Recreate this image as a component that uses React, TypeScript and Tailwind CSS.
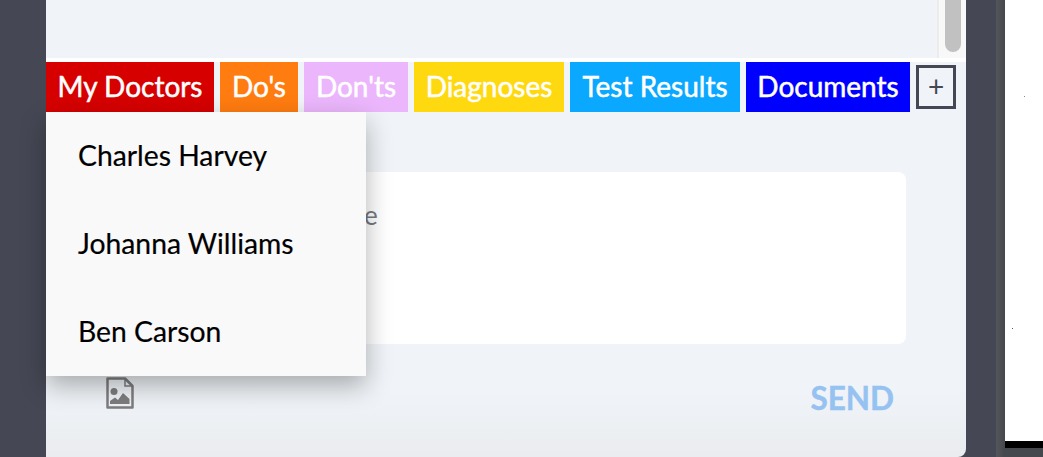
const TABS = [
  { label: 'My Doctors', className: 'w-[168px] bg-[#d60000]' },
  { label: "Do's", className: 'w-[78px] bg-[#ff7c10]' },
  { label: "Don'ts", className: 'w-[104px] bg-[#ebb6fc]' },
  { label: 'Diagnoses', className: 'w-[150px] bg-[#ffd90f]' },
  { label: 'Test Results', className: 'w-[170px] bg-[#0aa8ff]' },
  { label: 'Documents', className: 'w-[164px] bg-[#0000ff]' },
]

const DOCTORS = ['Charles Harvey', 'Johanna Williams', 'Ben Carson']

function ImageFileIcon() {
  return (
    <svg viewBox="0 0 28 32" className="h-8 w-7 text-[#7d7d7d]" fill="none">
      <path d="M1.5 1.5H19L26.5 9V30.5H1.5Z" stroke="currentColor" strokeWidth="2.5" strokeLinejoin="round" />
      <path d="M19 1.5V9H26.5" stroke="currentColor" strokeWidth="1.5" />
      <circle cx="8" cy="14.5" r="3.5" fill="currentColor" />
      <path d="M4 27V24L9 20.5L12 23L17 16L23.5 22V27Z" fill="currentColor" />
    </svg>
  )
}

export default function App() {
  return (
    <div className="flex h-[457px] w-[1043px] overflow-hidden bg-[#454754] pl-[46px] font-['Lato',sans-serif]">
      {/* Chat panel */}
      <div className="relative flex h-full w-[920px] flex-col rounded-br-lg bg-gradient-to-b from-[#f0f4f8] from-[85%] to-[#eaecef]">
        <div className="flex h-[58px] justify-end">
          <div className="flex w-[29px] justify-center border-l-2 border-[#ececec] bg-[#f8f8f8]">
            <div className="h-[52px] w-4 rounded-b-full bg-[#c1c1c1]" />
          </div>
        </div>
        <div className="h-1 bg-white" />

        {/* Tabs */}
        <div className="flex h-[50px] items-center gap-1.5">
          {TABS.map((tab) => (
            <div
              key={tab.label}
              className={`flex h-full items-center justify-center pb-0.5 text-[28px] text-white [-webkit-text-stroke:0.5px_white] ${tab.className}`}
            >
              {tab.label}
            </div>
          ))}
          <button className="flex h-11 w-10 items-center justify-center border-[3px] border-[#454754] pb-0.5 text-[28px] text-[#454754]">
            +
          </button>
        </div>

        {/* Message box */}
        <div className="mt-[60px] ml-10 h-[172px] w-[820px] rounded-lg bg-white pt-6 pl-[136px] text-[26px] text-[#77787f]">
          Your message
        </div>

        {/* Actions */}
        <div className="mt-[33px] flex items-start justify-between pr-[72px] pl-[60px]">
          <ImageFileIcon />
          <span className="mt-[3px] text-[31.5px] leading-[36px] font-bold text-[#95c2f0] [-webkit-text-stroke:0.4px_#95c2f0]">
            SEND
          </span>
        </div>

        {/* Doctors menu */}
        <div className="absolute top-[112px] left-0 w-80 bg-[#f9f9f9] shadow-[0_10px_24px_rgba(0,0,0,0.3)]">
          {DOCTORS.map((name) => (
            <div
              key={name}
              className="flex h-[88px] items-center pb-0.5 pl-8 text-[28.3px] text-black [-webkit-text-stroke:0.2px_black]"
            >
              {name}
            </div>
          ))}
        </div>
      </div>

      {/* Window behind */}
      <div className="ml-[30px] h-full w-[9px] bg-gradient-to-r from-[#53565a] to-[#45474c]" />
      <div className="relative flex h-full flex-1 flex-col bg-[#45484d]">
        <div className="h-[441px] bg-white" />
        <div className="h-[7px] bg-black" />
        <div className="absolute top-[96px] left-[19px] h-px w-px bg-[#8a8a8a]" />
        <div className="absolute top-[328px] left-[7px] h-px w-px bg-[#555555]" />
      </div>
    </div>
  )
}
